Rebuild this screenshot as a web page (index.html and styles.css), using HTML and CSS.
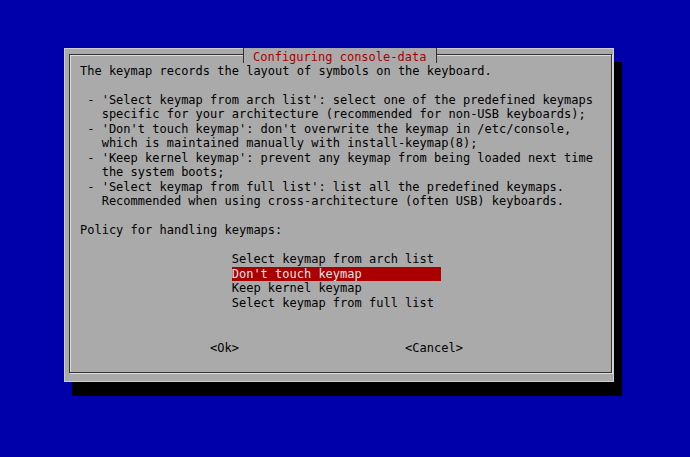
FILE: index.html
```html
<!DOCTYPE html>
<html>
<head>
<meta charset="utf-8">
<title>Configuring console-data</title>
<link rel="stylesheet" href="styles.css">
</head>
<body>
<div class="dialog">
  <div class="frame">
    <div class="title">Configuring console-data</div>
    <div class="text">The keymap records the layout of symbols on the keyboard.

 - 'Select keymap from arch list': select one of the predefined keymaps
   specific for your architecture (recommended for non-USB keyboards);
 - 'Don't touch keymap': don't overwrite the keymap in /etc/console,
   which is maintained manually with install-keymap(8);
 - 'Keep kernel keymap': prevent any keymap from being loaded next time
   the system boots;
 - 'Select keymap from full list': list all the predefined keymaps.
   Recommended when using cross-architecture (often USB) keyboards.

Policy for handling keymaps:</div>
    <ul class="menu">
      <li>Select keymap from arch list</li>
      <li class="sel">Don't touch keymap</li>
      <li>Keep kernel keymap</li>
      <li>Select keymap from full list</li>
    </ul>
    <div class="buttons">
      <span class="btn ok">&lt;Ok&gt;</span>
      <span class="btn cancel">&lt;Cancel&gt;</span>
    </div>
  </div>
</div>
</body>
</html>
```
FILE: styles.css
```css
html, body {
  margin: 0;
  padding: 0;
}
body {
  box-sizing: border-box;
  width: 690px;
  height: 457px;
  padding: 48px 0 0 64px;
  overflow: hidden;
  background: #0000aa;
  font-family: "DejaVu Sans Mono", "Liberation Mono", monospace;
  font-size: 12px;
  line-height: 14.5px;
  color: #000;
}
.dialog {
  box-sizing: border-box;
  width: 550px;
  padding: 6px 2px 8.5px 5px;
  background: #aaaaaa;
  box-shadow: inset 0 0 0 1px #cfcfcf, 8px 14px 0 #000;
}
.frame {
  position: relative;
  border: 1px solid #333;
  box-shadow: inset 1px 1px 0 #dcdcdc, 1px 1px 0 #dcdcdc;
  padding: 8.5px 10px 4px 10px;
}
.title {
  position: absolute;
  left: 173px;
  top: -7px;
  height: 13px;
  padding: 1.5px 10px 0 9px;
  border-left: 1px solid #333;
  border-right: 1px solid #333;
  background: #aaaaaa;
  color: #aa0000;
}
.text {
  white-space: pre;
}
.menu {
  list-style: none;
  margin: 14.5px 0 0 21ch;
  padding: 0;
  width: 29ch;
}
.menu li {
  white-space: pre;
  height: 14.5px;
}
.menu .sel {
  background: #aa0000;
  color: #e6e6e6;
}
.buttons {
  display: flex;
  height: 14.5px;
  margin: 31px 0 12.5px 0;
}
.ok {
  margin-left: 18ch;
}
.cancel {
  margin-left: 23ch;
}
```
